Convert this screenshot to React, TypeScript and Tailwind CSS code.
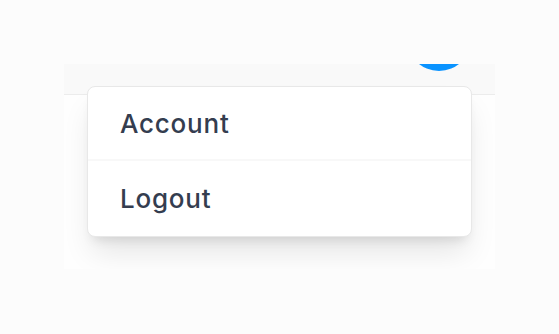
export default function App() {
  return (
    <div className="h-[334px] w-[559px] bg-[#fcfcfc] pt-16 pl-16" style={{ fontFamily: 'Inter, "Noto Sans", sans-serif' }}>
      <div className="relative h-[205px] w-[431px] overflow-hidden bg-[#fefefe]">
        <div className="relative h-[31px] border-b border-[#ececec] bg-[#f9f9f9]">
          <div className="absolute left-[343px] top-[-57px] h-[64px] w-[64px] rounded-full bg-[#0a93ff]" />
        </div>
        <div className="absolute left-[23px] top-[22px] w-[385px] rounded-lg border border-[#e8e8e8] bg-white shadow-[0_20px_30px_-5px_rgba(0,0,0,0.1),0_8px_12px_-6px_rgba(0,0,0,0.12)]">
          <div className="flex h-[72px] items-center px-8 text-[26px] font-medium tracking-[0.03em] text-[#343d4f]">Account</div>
          <div className="h-[2px] bg-[#f8f8f8]" />
          <div className="flex h-[75px] items-center px-8 text-[26px] font-medium tracking-[0.03em] text-[#343d4f]">Logout</div>
        </div>
      </div>
    </div>
  )
}
